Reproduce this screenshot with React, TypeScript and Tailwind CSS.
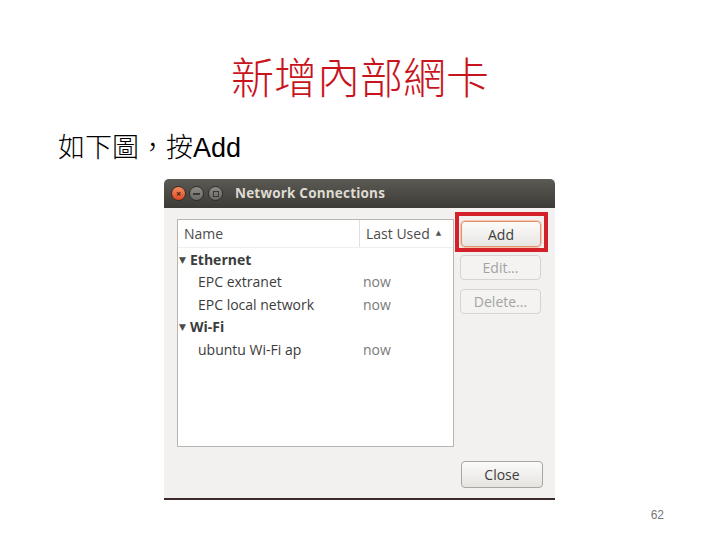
const ui = { fontFamily: '"Open Sans", "DejaVu Sans", sans-serif' };

const Row = ({ label, used, group }: { label: string; used?: string; group?: boolean }) => (
  <div className="flex h-[22.5px] items-center text-[14px] text-[#3c3c3c]">
    {group ? (
      <div className="flex items-center pl-[1px]">
        <span className="text-[9px] text-[#4c4c4c] w-[11px]">▼</span>
        <span className="font-bold">{label}</span>
      </div>
    ) : (
      <>
        <span className="w-[185px] pl-[20px]">{label}</span>
        <span className="text-[#7a7a7a]">{used}</span>
      </>
    )}
  </div>
);

const App = () => {
  return (
    <div className="w-[720px] h-[540px] bg-white flex flex-col overflow-hidden">
      <h1
        className="pt-[50px] text-center text-[43px] leading-[50px] text-[#c8141c] font-light"
        style={{ fontFamily: '"Noto Sans CJK TC", serif' }}
      >
        新增內部網卡
      </h1>
      <p
        className="mt-[32px] pl-[58px] text-[27px] leading-[32px] text-black font-light"
        style={{ fontFamily: '"Liberation Sans", "Noto Sans CJK TC", sans-serif' }}
      >
        如下圖，按Add
      </p>

      {/* window */}
      <div className="mt-[15px] ml-[164px] w-[391px] h-[321px] flex flex-col bg-[#f2f1f0] border-b-2 border-[#3a2a2a]" style={ui}>
        <div className="h-[29px] flex items-center rounded-t-[5px] bg-gradient-to-b from-[#5b5a54] to-[#3c3b37] pl-[7px]">
          <div className="w-[15px] h-[15px] rounded-full bg-gradient-to-b from-[#f58a5c] to-[#dc4a22] border border-[#3a2a22] flex items-center justify-center text-[9px] leading-none text-[#3b2012] font-bold">
            ×
          </div>
          <div className="ml-[3px] w-[15px] h-[15px] rounded-full bg-gradient-to-b from-[#8c8b86] to-[#6a6964] border border-[#2e2d2a] flex items-center justify-center">
            <div className="w-[7px] h-[2px] bg-[#3a3935]" />
          </div>
          <div className="ml-[4px] w-[15px] h-[15px] rounded-full bg-gradient-to-b from-[#8c8b86] to-[#6a6964] border border-[#2e2d2a] flex items-center justify-center">
            <div className="w-[6px] h-[6px] border border-[#3a3935]" />
          </div>
          <span className="ml-[12px] text-[13.5px] font-bold text-[#dfdbd2] tracking-[0.2px]">Network Connections</span>
        </div>

        <div className="flex flex-1 flex-col">
          <div className="flex items-start">
            <div className="mt-[11px] ml-[13px] w-[277px] h-[228px] bg-white border border-[#b8b6b2]">
              <div className="flex h-[28px] items-center text-[14px] text-[#4c4c4c] border-b border-[#f0efee]">
                <span className="w-[182px] h-full flex items-center pl-[6px] border-r border-[#e2e0dd]">Name</span>
                <span className="pl-[6px]">Last Used</span>
                <span className="ml-[6px] text-[7px] text-[#555]">▲</span>
              </div>
              <Row label="Ethernet" group />
              <Row label="EPC extranet" used="now" />
              <Row label="EPC local network" used="now" />
              <Row label="Wi-Fi" group />
              <Row label="ubuntu Wi-Fi ap" used="now" />
            </div>

            <div className="ml-[1px] mt-[4px] w-[93px] flex flex-col">
              <div className="h-[40px] border-[4px] border-[#d3202a] pt-[5px] pl-[2px]">
                <div className="w-[80px] h-[26px] rounded-[4px] border border-[#e0906c] bg-gradient-to-b from-[#fbfbfa] to-[#e8e6e3] shadow-[0_0_0_1px_#f6c8b0] flex items-center justify-center text-[14px] text-[#3c3c3c]">
                  Add
                </div>
              </div>
              <div className="mt-[3px] ml-[5px] w-[81px] h-[25px] rounded-[4px] border border-[#d6d4d1] bg-[#f4f3f2] flex items-center justify-center text-[14px] text-[#a3a3a3]">
                Edit...
              </div>
              <div className="mt-[9px] ml-[5px] w-[81px] h-[25px] rounded-[4px] border border-[#d6d4d1] bg-[#f4f3f2] flex items-center justify-center text-[14px] text-[#a3a3a3]">
                Delete...
              </div>
            </div>
          </div>

          <div className="flex justify-end pr-[12px] mt-[14px]">
            <div className="w-[82px] h-[27px] rounded-[4px] border border-[#a8a6a2] bg-gradient-to-b from-[#fbfbfa] to-[#e6e4e1] flex items-center justify-center text-[14px] text-[#3c3c3c]">
              Close
            </div>
          </div>
        </div>
      </div>

      <div className="flex justify-end pr-[56px] mt-[6px]">
        <span className="text-[12px] text-[#777]" style={{ fontFamily: '"Liberation Sans", sans-serif' }}>
          62
        </span>
      </div>
    </div>
  );
};

export default App;
